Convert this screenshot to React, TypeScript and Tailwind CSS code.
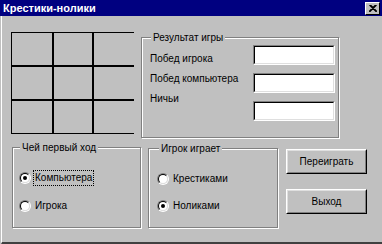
import React from 'react';

// classic Win95-ish form: "Крестики-нолики"

const Radio = ({ checked }: { checked?: boolean }) => (
  <span className="w-3 h-3 rounded-full border border-t-[#808080] border-l-[#808080] border-b-white border-r-white flex shrink-0">
    <span className="flex-1 rounded-full border border-t-black border-l-black border-b-[#dfdfdf] border-r-[#dfdfdf] bg-white flex items-center justify-center">
      {checked && <span className="w-1 h-1 rounded-full bg-black" />}
    </span>
  </span>
);

const RadioRow = ({ label, checked, focused }: { label: string; checked?: boolean; focused?: boolean }) => (
  <div className="h-4 flex items-center gap-[2px]">
    <Radio checked={checked} />
    <span
      className={
        focused
          ? 'border border-dotted border-black px-[1px] leading-[14px]'
          : 'border border-transparent px-[1px] leading-[14px]'
      }
    >
      {label}
    </span>
  </div>
);

const Group = ({
  title,
  className,
  titleClass,
  children,
}: {
  title: string;
  className: string;
  titleClass: string;
  children: React.ReactNode;
}) => (
  <div className={`relative border border-[#808080] shadow-[inset_1px_1px_0_#fff,1px_1px_0_#fff] ${className}`}>
    <span className={`absolute -top-[7px] bg-[#c0c0c0] px-[2px] leading-[13px] ${titleClass}`}>{title}</span>
    {children}
  </div>
);

const Field = () => (
  <div className="w-[82px] h-5 border border-t-[#808080] border-l-[#808080] border-b-white border-r-white flex">
    <div className="flex-1 border border-t-black border-l-black border-b-[#dfdfdf] border-r-[#dfdfdf] bg-white" />
  </div>
);

const Button = ({ label }: { label: string }) => (
  <div className="w-[81px] h-[25px] border border-t-white border-l-white border-b-black border-r-black flex">
    <div className="flex-1 border border-t-[#dfdfdf] border-l-[#dfdfdf] border-b-[#808080] border-r-[#808080] flex items-center justify-center">
      {label}
    </div>
  </div>
);

export default function App() {
  return (
    <div className="w-[382px] h-[244px] bg-[#c0c0c0] flex flex-col text-[10px] text-black font-['Liberation_Sans',Arial,sans-serif] overflow-hidden">
      {/* title bar */}
      <div className="h-4 bg-[#000080] flex items-center pl-[3px] pr-[2px] shrink-0">
        <span className="text-white font-bold text-[11px] leading-4">Крестики-нолики</span>
        <div className="ml-auto w-[15px] h-[13px] bg-[#c0c0c0] border border-t-white border-l-white border-b-black border-r-black flex items-center justify-center">
          <svg width="8" height="7" viewBox="0 0 8 7">
            <path d="M0.5 0 L7.5 7 M1.5 0 L8 6.5 M7.5 0 L0.5 7 M6.5 0 L0 6.5" stroke="#000" strokeWidth="1.2" />
          </svg>
        </div>
      </div>

      {/* body */}
      <div className="flex-1 ml-px border-l border-white border-b-2 border-b-[#404040] flex flex-col">
        <div className="flex items-start">
          {/* board */}
          <div className="ml-[9px] mt-4 border-l border-t border-b border-black bg-black grid grid-cols-[40px_38px_40px] grid-rows-[32px_32px_32px] gap-[2px]">
            {Array.from({ length: 9 }).map((_, i) => (
              <div key={i} className="bg-[#c0c0c0]" />
            ))}
          </div>

          {/* results */}
          <Group title="Результат игры" className="ml-[7px] mt-[21px] w-[198px] h-[101px] flex" titleClass="left-[9px]">
            <div className="pl-2 pt-[11px] flex flex-col">
              <div className="leading-5">Побед игрока</div>
              <div className="leading-5">Побед компьютера</div>
              <div className="leading-5">Ничьи</div>
            </div>
            <div className="ml-auto pr-[3px] pt-[7px] flex flex-col gap-2">
              <Field />
              <Field />
              <Field />
            </div>
          </Group>
        </div>

        <div className="mt-[9px] flex items-start">
          <Group title="Чей первый ход" className="ml-[10px] w-[129px] h-[81px] pl-[6px] pt-[22px] flex flex-col gap-3" titleClass="left-[7px]">
            <RadioRow label="Компьютера" checked focused />
            <RadioRow label="Игрока" />
          </Group>

          <Group title="Игрок играет" className="ml-[7px] mt-px w-[130px] h-[80px] pl-2 pt-[22px] flex flex-col gap-[11px]" titleClass="left-[10px]">
            <RadioRow label="Крестиками" />
            <RadioRow label="Ноликами" checked />
          </Group>

          <div className="ml-2 mt-[2px] flex flex-col gap-[15px]">
            <Button label="Переиграть" />
            <Button label="Выход" />
          </div>
        </div>
      </div>
    </div>
  );
}
